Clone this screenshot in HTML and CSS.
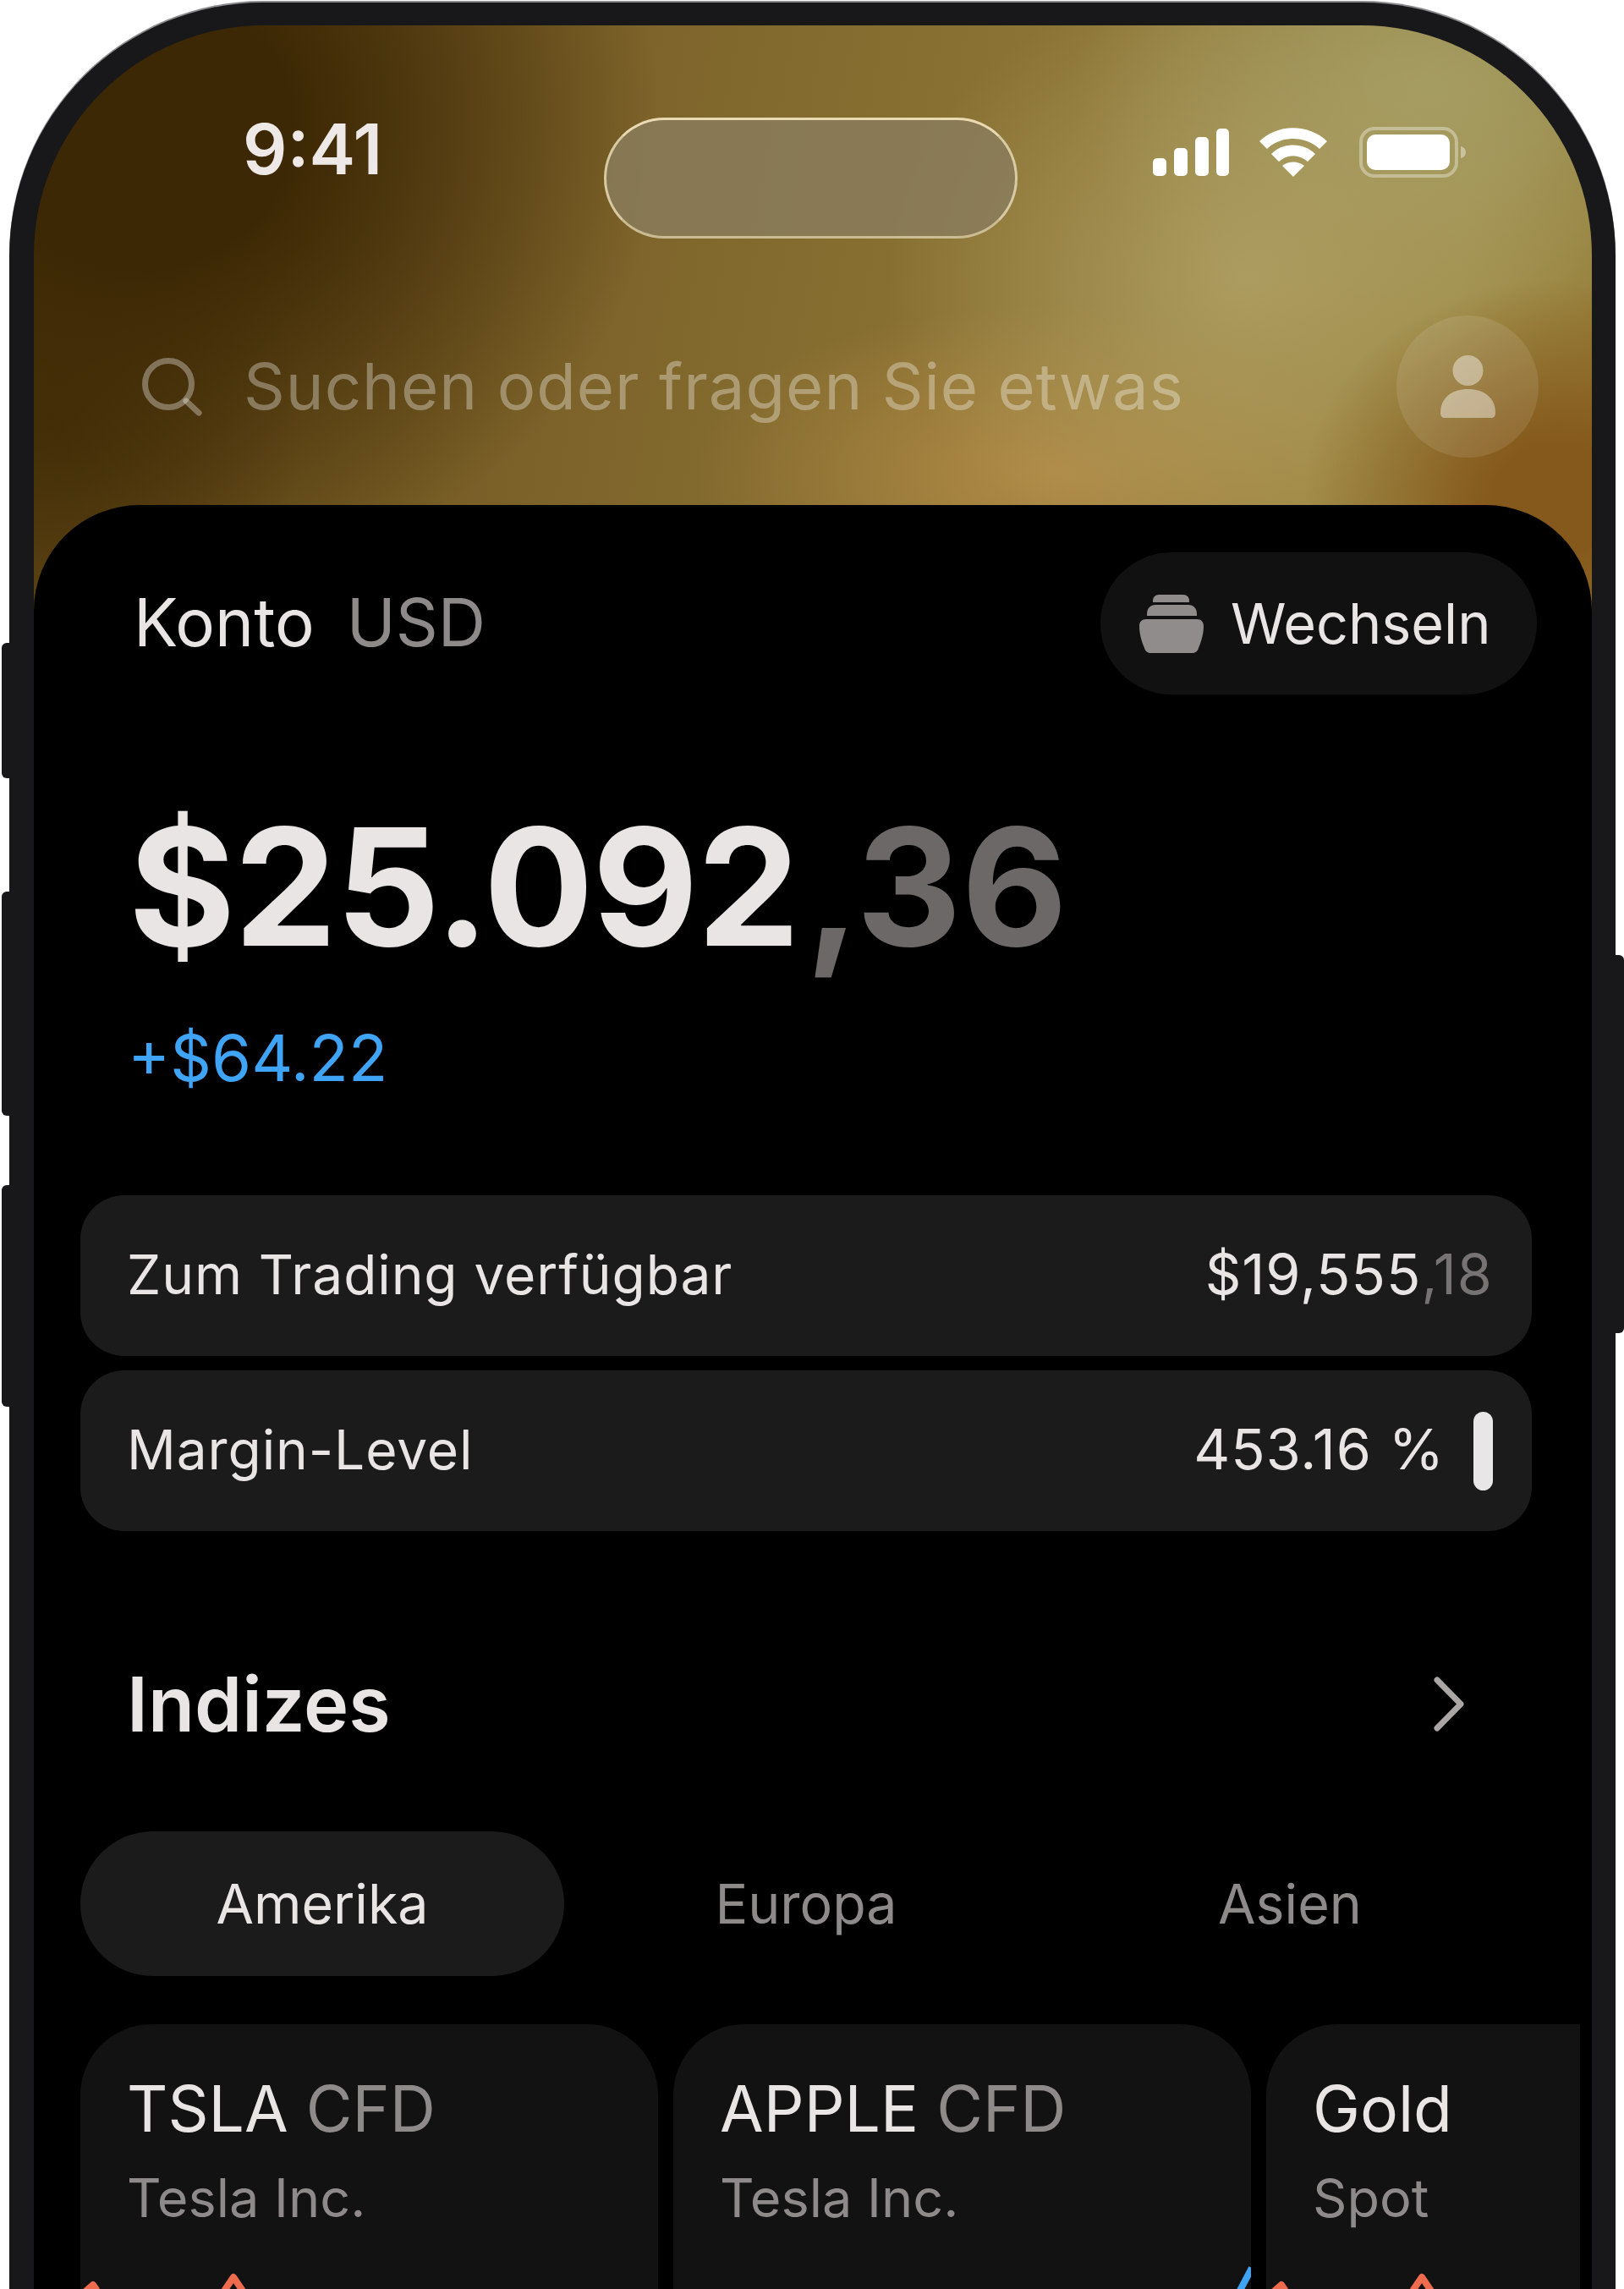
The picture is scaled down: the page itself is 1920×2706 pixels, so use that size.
FILE: index.html
```html
<!DOCTYPE html>
<html lang="de">
<head>
  <meta charset="UTF-8" />
  <meta name="viewport" content="width=device-width, initial-scale=1" />
  <title>Konto</title>
  <link rel="stylesheet" href="styles.css">
</head>
<body>
  <div class="phone">
    <span class="side-btn btn-silent"></span>
    <span class="side-btn btn-up"></span>
    <span class="side-btn btn-down"></span>
    <span class="side-btn btn-power"></span>

    <div class="screen">
      <div class="status">
        <div class="time">9:41</div>
        <div class="island"></div>
        <div class="status-icons">
          <svg class="signal" width="90" height="56" viewBox="0 0 90 56" fill="#fff">
            <rect x="0" y="35" width="16" height="21" rx="5" />
            <rect x="25" y="23" width="16" height="33" rx="5" />
            <rect x="50" y="10" width="16" height="46" rx="5" />
            <rect x="75" y="0" width="15" height="56" rx="5" />
          </svg>
          <svg class="wifi" width="80" height="58" viewBox="0 0 80 58" fill="#fff">
            <path d="M0 16 C22 -5 58 -5 80 16 L71 25 C54 9 26 9 9 25 Z" />
            <path d="M14 31 C28 17 52 17 66 31 L57 40 C46 31 34 31 23 40 Z" />
            <path d="M27 45 C34 39 46 39 53 45 L40 58 Z" />
          </svg>
          <svg class="battery" width="126" height="60" viewBox="0 0 126 60" fill="none">
            <rect x="2" y="2" width="113" height="56" rx="16" stroke="#fff" stroke-opacity="0.35" stroke-width="4" />
            <rect x="9" y="9" width="98" height="42" rx="10" fill="#fff" />
            <path d="M120 23 C124 24 126 27 126 30 C126 33 124 36 120 37 Z" fill="#fff" fill-opacity="0.4" />
          </svg>
        </div>
      </div>

      <div class="search">
        <svg class="search-icon" width="71" height="69" viewBox="0 0 71 69" fill="none">
          <circle cx="31" cy="31" r="27.5" stroke="currentColor" stroke-width="7" />
          <path d="M52 51 L67 65" stroke="currentColor" stroke-width="7" stroke-linecap="round" />
        </svg>
        <span class="search-text">Suchen oder fragen Sie etwas</span>
        <div class="avatar">
          <svg width="65" height="74" viewBox="0 0 65 74" fill="currentColor">
            <circle cx="32.5" cy="18" r="18" />
            <path d="M0 68 C0 50 14 40 32.5 40 C51 40 65 50 65 68 C65 72 63 74 60 74 L5 74 C2 74 0 72 0 68 Z" />
          </svg>
        </div>
      </div>

      <div class="panel">
        <div class="account">
          <div class="account-name">Konto <span class="muted">USD</span></div>
          <button class="switch" type="button">
            <svg width="76" height="69" viewBox="0 0 76 69" fill="#908c8c">
              <path d="M16 7 C16 3 19 0 23 0 L52 0 C56 0 59 3 59 7 L59 9 L16 9 Z" />
              <path d="M9 23 C9 16 13 12 19 12 L58 12 C64 12 68 16 68 23 L68 25 L9 25 Z" />
              <path d="M0 37 C0 32 3 29 8 29 L68 29 C73 29 76 32 76 37 C76 47 73 56 70 63 C69 67 66 69 62 69 L14 69 C10 69 7 67 6 63 C3 56 0 47 0 37 Z" />
            </svg>
            Wechseln
          </button>
        </div>

        <div class="balance">$25.092<span class="cents">,36</span></div>
        <div class="change">+$64.22</div>

        <div class="rows">
          <div class="row">
            <span class="row-label">Zum Trading verfügbar</span>
            <span class="row-value">$19,555<span class="cents-small">,18</span></span>
          </div>
          <div class="row">
            <span class="row-label">Margin-Level</span>
            <span class="row-value">453.16 %<i class="level-bar"></i></span>
          </div>
        </div>

        <div class="section-head">
          <h2>Indizes</h2>
          <svg width="36" height="65" viewBox="0 0 36 65" fill="none">
            <path d="M4 4 L32 32.5 L4 61" stroke="#aaa6a6" stroke-width="7" stroke-linecap="round" stroke-linejoin="round" />
          </svg>
        </div>

        <div class="tabs">
          <div class="tab active">Amerika</div>
          <div class="tab">Europa</div>
          <div class="tab">Asien</div>
        </div>

        <div class="cards">
          <div class="card">
            <div class="card-title">TSLA <span class="muted">CFD</span></div>
            <div class="card-sub">Tesla Inc.</div>
            <svg class="spark" width="683" height="60" viewBox="0 0 683 60" fill="none">
              <path d="M-10 60 L15 38 L30 60 M160 60 L181 29 L202 60" stroke="#ee6c4d" stroke-width="8" stroke-linejoin="round" />
            </svg>
          </div>
          <div class="card">
            <div class="card-title">APPLE <span class="muted">CFD</span></div>
            <div class="card-sub">Tesla Inc.</div>
            <svg class="spark" width="683" height="60" viewBox="0 0 683 60" fill="none">
              <path d="M662 60 L684 18" stroke="#3fa4f5" stroke-width="8" />
            </svg>
          </div>
          <div class="card">
            <div class="card-title">Gold</div>
            <div class="card-sub">Spot</div>
            <svg class="spark" width="683" height="60" viewBox="0 0 683 60" fill="none">
              <path d="M-7 60 L18 38 L33 60 M163 60 L184 29 L205 60" stroke="#ee6c4d" stroke-width="8" stroke-linejoin="round" />
            </svg>
          </div>
        </div>
      </div>
    </div>
  </div>
</body>
</html>
```

FILE: styles.css
```css
* {
  box-sizing: border-box;
}
html, body {
  margin: 0;
  padding: 0;
  height: 2706px;
  overflow: hidden;
  background: #fff;
}
body {
  font-family: 'Inter', 'Liberation Sans', sans-serif;
  color: #e8e5e4;
}

/* Phone body */
.phone {
  position: relative;
  width: 1899px;
  height: 2703px;
  margin: 3px 0 0 11px;
  padding: 27px 28px 0 29px;
  background: #18171a;
  border-radius: 300px 300px 0 0;
  box-shadow: 0 -2px 0 #8b8a8c;
}
.side-btn {
  position: absolute;
  width: 11px;
  background: #18171a;
}
.btn-silent {
  left: -9px;
  top: 757px;
  height: 160px;
  border-radius: 6px 0 0 6px;
}
.btn-up {
  left: -9px;
  top: 1051px;
  height: 265px;
  border-radius: 6px 0 0 6px;
}
.btn-down {
  left: -9px;
  top: 1398px;
  height: 262px;
  border-radius: 6px 0 0 6px;
}
.btn-power {
  right: -10px;
  top: 1126px;
  height: 447px;
  border-radius: 0 6px 6px 0;
}

.screen {
  display: flex;
  flex-direction: column;
  height: 2676px;
  border-radius: 272px 272px 0 0;
  overflow: hidden;
  background:
    radial-gradient(ellipse 300px 260px at 1800px 560px, #85591b 25%, rgba(133,89,27,0) 100%),
    radial-gradient(ellipse 420px 360px at 1430px 300px, rgba(180,165,105,0.75), rgba(180,165,105,0) 100%),
    radial-gradient(ellipse 420px 200px at 1200px 530px, rgba(190,145,75,0.7), rgba(190,145,75,0) 100%),
    radial-gradient(ellipse 420px 300px at 1650px 70px, rgba(165,160,105,0.8), rgba(165,160,105,0) 100%),
    radial-gradient(ellipse 620px 560px at 120px 120px, #3d2805 30%, rgba(61,40,5,0) 100%),
    radial-gradient(ellipse 300px 300px at 20px 470px, rgba(70,48,8,0.9), rgba(70,48,8,0) 100%),
    linear-gradient(100deg, #5c4412 0%, #7b6128 28%, #8d7636 55%, #9c8a45 75%, #8c6a26 100%);
}

/* Status bar */
.status {
  display: flex;
  flex-shrink: 0;
  height: 252px;
  padding: 109px 0 0 247px;
}
.time {
  width: 427px;
  font-size: 82px;
  font-weight: 600;
  line-height: 76px;
  color: #eee9e6;
}
.island {
  width: 489px;
  height: 143px;
  border-radius: 72px;
  background: rgba(138, 124, 92, 0.85);
  border: 3px solid rgba(245, 230, 190, 0.75);
  border-top-color: rgba(245, 230, 190, 0.9);
  border-bottom-color: rgba(245, 230, 190, 0.6);
}
.status-icons {
  display: flex;
  align-items: center;
  margin: 10px 0 0 160px;
  height: 62px;
}
.wifi {
  margin-left: 36px;
}
.battery {
  margin-left: 38px;
}

/* Search */
.search {
  display: flex;
  flex-shrink: 0;
  align-items: center;
  height: 168px;
  margin-top: 91px;
  padding: 0 63px 0 128px;
  color: rgba(255, 255, 255, 0.33);
}
.search-text {
  margin: -3px 0 0 49px;
  font-size: 76px;
  letter-spacing: 1px;
}
.avatar {
  display: flex;
  align-items: center;
  justify-content: center;
  width: 168px;
  height: 168px;
  margin-left: auto;
  border-radius: 50%;
  background: rgba(255, 255, 255, 0.1);
  color: rgba(255, 255, 255, 0.42);
}

/* Black panel */
.panel {
  flex: 1;
  margin-top: 56px;
  padding: 56px 0 0 55px;
  background: #000;
  border-radius: 125px 125px 0 0;
  overflow: hidden;
}
.muted {
  color: #8e8a8a;
}
.cents {
  margin-left: 8px;
  letter-spacing: 0;
  color: #6d6868;
}
.cents-small {
  color: #777373;
}
.account {
  display: flex;
  align-items: center;
  justify-content: space-between;
  padding: 0 65px 0 63px;
}
.account-name {
  margin-top: -4px;
  font-size: 78px;
  word-spacing: 16px;
}
.switch {
  display: flex;
  align-items: center;
  gap: 32px;
  width: 516px;
  height: 168px;
  padding: 0 0 0 46px;
  border: none;
  border-radius: 84px;
  background: #111;
  color: #e8e5e4;
  font-family: inherit;
  font-size: 66.5px;
}
.balance {
  margin: 127px 0 0 57px;
  font-size: 193px;
  font-weight: 700;
  line-height: 200px;
  letter-spacing: -1.5px;
}
.change {
  margin: 62px 0 0 56px;
  font-size: 76px;
  line-height: 80px;
  color: #3fa4f5;
}
.rows {
  display: flex;
  flex-direction: column;
  gap: 17px;
  width: 1716px;
  margin-top: 123px;
}
.row {
  display: flex;
  align-items: center;
  justify-content: space-between;
  height: 190px;
  padding: 0 46px 0 55px;
  border-radius: 52px;
  background: #1c1b1c;
  font-size: 64px;
  letter-spacing: 0.9px;
}
.row-label, .row-value {
  margin-top: -4px;
}
.row-value {
  display: flex;
  align-items: center;
  font-size: 66.5px;
  letter-spacing: 1px;
}
.level-bar {
  width: 23px;
  height: 93px;
  margin: 4px 0 0 34px;
  border-radius: 12px;
  background: #e8e6e6;
}
.section-head {
  display: flex;
  align-items: center;
  justify-content: space-between;
  width: 1716px;
  height: 100px;
  margin-top: 154px;
  padding: 0 80px 0 55px;
}
.section-head h2 {
  margin: 0;
  font-size: 90px;
  font-weight: 600;
}
.tabs {
  display: flex;
  width: 1716px;
  margin-top: 101px;
}
.tab {
  display: flex;
  flex: 1;
  align-items: center;
  justify-content: center;
  height: 171px;
  border-radius: 86px;
  font-size: 64.5px;
  color: #8e8a8a;
}
.tab.active {
  background: #1c1b1c;
  color: #e8e5e4;
}
.cards {
  display: flex;
  gap: 18px;
  width: 1773px;
  margin-top: 57px;
  overflow: hidden;
}
.card {
  flex: 0 0 683px;
  height: 400px;
  padding-top: 60px;
  border-radius: 84px 84px 0 0;
  background: #131213;
  overflow: hidden;
}
.card-title {
  padding-left: 55px;
  font-size: 75px;
  line-height: 80px;
}
.card-sub {
  margin-top: 30px;
  padding-left: 55px;
  font-size: 63px;
  line-height: 70px;
  color: #8e8a8a;
}
.spark {
  display: block;
  margin-top: 30px;
}
```
